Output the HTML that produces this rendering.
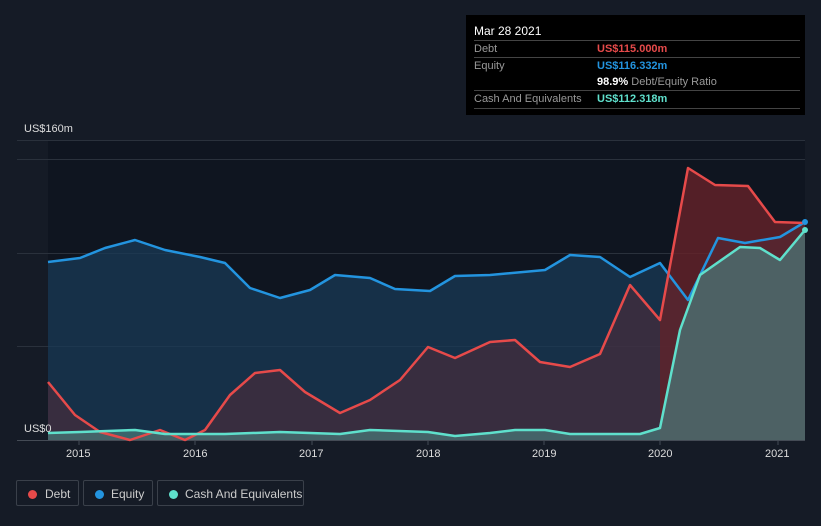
<!DOCTYPE html><html><head><style>
body{margin:0;background:#151b26;width:821px;height:526px;overflow:hidden;font-family:"Liberation Sans",sans-serif;position:relative}
.tt{position:absolute;left:466px;top:15px;width:339px;height:100px;background:#000;color:#fff;font-size:11px}
.row{position:absolute;left:8px;right:5px;border-top:1px solid #444;height:17px;line-height:17px;color:#999}
.row span{position:absolute;left:123px}
.leg{position:absolute;top:480px;height:26px;border:1px solid #3a404a;border-radius:2px;color:#ccc;font-size:12px;line-height:26px;box-sizing:border-box}
.leg i{position:absolute;left:11px;top:9px;width:9px;height:9px;border-radius:50%}
.ax{position:absolute;top:448px;color:#ddd;font-size:11px}
</style></head><body>
<svg width="821" height="526" style="position:absolute;left:0;top:0">
<rect x="48" y="140" width="757" height="300" fill="#0f1520"/>
<g stroke="#2a313c" stroke-width="1"><line x1="17" y1="140.5" x2="805" y2="140.5"/><line x1="17" y1="159.5" x2="805" y2="159.5"/><line x1="17" y1="253.5" x2="805" y2="253.5"/><line x1="17" y1="346.5" x2="805" y2="346.5"/></g>
<line x1="17" y1="440.5" x2="805" y2="440.5" stroke="#444b55"/>
<g stroke="#444b55"><line x1="79" y1="440" x2="79" y2="445"/><line x1="195" y1="440" x2="195" y2="445"/><line x1="312" y1="440" x2="312" y2="445"/><line x1="428" y1="440" x2="428" y2="445"/><line x1="544" y1="440" x2="544" y2="445"/><line x1="660" y1="440" x2="660" y2="445"/><line x1="778" y1="440" x2="778" y2="445"/></g>
<path d="M48,262L80,258L105,248L135,240L165,250L200,257L225,263L250,288L280,298L310,290L335,275L370,278L395,289L430,291L455,276L490,275L545,270L570,255L600,257L630,277L660,263L688,300L718,238L745,243L780,237L805,222L805,440L48,440Z" fill="#1a3a55" fill-opacity=".75"/>
<path d="M48,382L75,415L100,432L130,440L160,430L185,440L205,430L230,395L255,373L280,370L305,392L340,413L370,400L400,380L428,347L455,358L490,342L515,340L540,362L570,367L600,354L630,285L660,320L688,168L715,185L748,186L775,222L805,223L805,440L48,440Z" fill="#5a2a35" fill-opacity=".5"/>
<path d="M660,320L688,168L715,185L748,186L775,222L805,223L805,440L660,440Z" fill="#6b1f25" fill-opacity=".6"/>
<path d="M48,433L80,432L135,430L165,434L225,434L280,432L340,434L370,430L428,432L455,436L490,433L515,430L545,430L570,434L640,434L660,428L680,330L700,275L740,247L760,248L780,260L805,230L805,440L48,440Z" fill="#4a7a7a" fill-opacity=".7"/>
<g fill="none" stroke-width="2.5" stroke-linejoin="round">
<path d="M48,262L80,258L105,248L135,240L165,250L200,257L225,263L250,288L280,298L310,290L335,275L370,278L395,289L430,291L455,276L490,275L545,270L570,255L600,257L630,277L660,263L688,300L718,238L745,243L780,237L805,222" stroke="#2394df"/>
<path d="M48,382L75,415L100,432L130,440L160,430L185,440L205,430L230,395L255,373L280,370L305,392L340,413L370,400L400,380L428,347L455,358L490,342L515,340L540,362L570,367L600,354L630,285L660,320L688,168L715,185L748,186L775,222L805,223" stroke="#e64a4a"/>
<path d="M48,433L80,432L135,430L165,434L225,434L280,432L340,434L370,430L428,432L455,436L490,433L515,430L545,430L570,434L640,434L660,428L680,330L700,275L740,247L760,248L780,260L805,230" stroke="#5fe0cc"/>
</g>
<circle cx="805" cy="222" r="3" fill="#2394df"/><circle cx="805" cy="230" r="3" fill="#5fe0cc"/>
<text x="24" y="132" fill="#ddd" font-size="11" font-family="Liberation Sans">US$160m</text>
<text x="24" y="432" fill="#ddd" font-size="11" font-family="Liberation Sans">US$0</text>
</svg>
<div class="ax" style="left:66px">2015</div><div class="ax" style="left:183px">2016</div><div class="ax" style="left:299px">2017</div><div class="ax" style="left:416px">2018</div><div class="ax" style="left:532px">2019</div><div class="ax" style="left:648px">2020</div><div class="ax" style="left:765px">2021</div>
<div class="tt">
<div style="position:absolute;left:8px;top:9px;font-size:12px">Mar 28 2021</div>
<div class="row" style="top:25px">Debt<span style="color:#e64a4a;font-weight:bold">US$115.000m</span></div>
<div class="row" style="top:42px">Equity<span style="color:#2394df;font-weight:bold">US$116.332m</span></div>
<div class="row" style="top:59px;border-top:none"><span><b style="color:#fff">98.9%</b> Debt/Equity Ratio</span></div>
<div class="row" style="top:75px;border-bottom:1px solid #444">Cash And Equivalents<span style="color:#5fe0cc;font-weight:bold">US$112.318m</span></div>
</div>
<div class="leg" style="left:16px;width:63px"><i style="background:#e64a4a"></i><span style="margin-left:28px">Debt</span></div>
<div class="leg" style="left:83px;width:70px"><i style="background:#2394df"></i><span style="margin-left:27px">Equity</span></div>
<div class="leg" style="left:157px;width:147px"><i style="background:#5fe0cc"></i><span style="margin-left:27px">Cash And Equivalents</span></div>
</body></html>
